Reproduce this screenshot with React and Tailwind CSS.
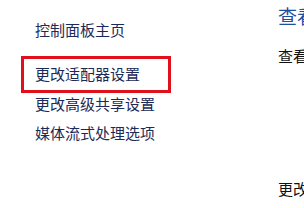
export default function App() {
  const font = { fontFamily: '"Noto Sans CJK SC", "Noto Sans", sans-serif' };
  return (
    <div className="w-[304px] h-[208px] bg-white overflow-hidden flex" style={font}>
      <div className="w-[278px] shrink-0 pt-[20px] pl-[21px] text-[15px] text-[#1c2a58]">
        <div className="h-[20px] leading-[20px] pl-[14px] whitespace-nowrap">控制面板主页</div>
        <div className="mt-[16px] w-[150px] h-[37px] border-[3px] border-[#e0101a] flex items-center pl-[11px] whitespace-nowrap">
          更改适配器设置
        </div>
        <div className="mt-[1px] h-[20px] leading-[20px] pl-[14px] whitespace-nowrap">更改高级共享设置</div>
        <div className="mt-[9px] h-[20px] leading-[20px] pl-[14px] whitespace-nowrap">媒体流式处理选项</div>
      </div>
      <div className="flex flex-col whitespace-nowrap">
        <div className="mt-[3px] h-[25px] leading-[25px] text-[19px] text-[#1e4f9e]">查看你的基本网络信息</div>
        <div className="mt-[18px] h-[20px] leading-[20px] text-[15px] text-[#111]">查看活动网络</div>
        <div className="mt-[113px] h-[20px] leading-[20px] text-[15px] text-[#111]">更改网络设置</div>
      </div>
    </div>
  );
}
